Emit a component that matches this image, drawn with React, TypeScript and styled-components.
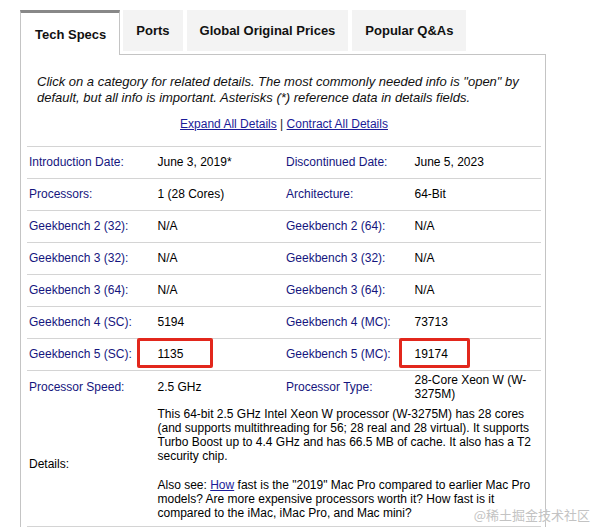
import React from "react";
import styled, { createGlobalStyle } from "styled-components";

const Global = createGlobalStyle`
  html, body { margin: 0; padding: 0; background: #fff; overflow: hidden; }
  body { font-family: "Liberation Sans", Arial, Helvetica, sans-serif; color: #000; }
`;

const Page = styled.div`
  position: relative;
  width: 593px;
  height: 527px;
  padding: 10px 0 0 20px;
  box-sizing: border-box;
  overflow: hidden;
`;

const TabBar = styled.div`
  display: flex;
  align-items: flex-start;
  gap: 4px;
  position: relative;
  z-index: 2;
`;

const Tab = styled.div<{ $active?: boolean }>`
  display: flex;
  align-items: center;
  justify-content: center;
  box-sizing: border-box;
  font-size: 13px;
  font-weight: bold;
  color: #111;
  white-space: nowrap;
  padding: 0 13px;
  height: ${(p) => (p.$active ? "45px" : "41px")};
  background: ${(p) => (p.$active ? "#fff" : "#f3f3f3")};
  border-top: ${(p) => (p.$active ? "3px solid #888" : "none")};
  border-left: ${(p) => (p.$active ? "1px solid #c4c4c4" : "none")};
  border-right: ${(p) => (p.$active ? "1px solid #c4c4c4" : "none")};
  padding-left: ${(p) => (p.$active ? "14px" : "13px")};
  margin-right: ${(p) => (p.$active ? "-1px" : "0")};
`;

const Panel = styled.div`
  width: 526px;
  box-sizing: border-box;
  margin-top: -1px;
  border: 1px solid #c4c4c4;
  padding: 0 4px 20px 6px;
`;

const Intro = styled.p`
  margin: 19px 0 0;
  padding: 0 10px;
  font-size: 13px;
  line-height: 16px;
  font-style: italic;
  color: #111;
`;

const LinkLine = styled.div`
  margin-top: 11px;
  text-align: center;
  font-size: 12px;
  line-height: 14px;
  color: #222;
`;

const Link = styled.a`
  color: #1b1b98;
  text-decoration: underline;
  cursor: pointer;
`;

const Table = styled.div`
  margin-top: 15px;
  border-top: 1px solid #d4d4d4;
`;

const Row = styled.div<{ $plain?: boolean }>`
  display: grid;
  grid-template-columns: repeat(4, 1fr);
  min-height: 31px;
  border-bottom: ${(p) => (p.$plain ? "none" : "1px solid #d4d4d4")};
`;

const Cell = styled.div<{ $label?: boolean }>`
  position: relative;
  display: flex;
  align-items: center;
  padding: 3px 2px;
  font-size: 12px;
  line-height: 13.8px;
  color: ${(p) => (p.$label ? "#15157e" : "#000")};
`;

const DetailBody = styled.div`
  grid-column: span 3;
  padding: 2px 2px 6px;
  font-size: 12px;
  line-height: 14px;
  color: #000;
  display: flex;
  flex-direction: column;
  gap: 15px;
`;

const Para = styled.p`
  margin: 0;
`;

const Highlight = styled.span<{ $left: number; $width: number }>`
  position: absolute;
  top: -1px;
  left: ${(p) => p.$left}px;
  width: ${(p) => p.$width}px;
  height: 30px;
  box-sizing: border-box;
  border: 3px solid #e2271c;
  border-radius: 2px;
  pointer-events: none;
`;

const Watermark = styled.div`
  position: absolute;
  right: 3px;
  bottom: 4px;
  font-family: "Noto Sans CJK SC", "Liberation Sans", sans-serif;
  font-size: 13px;
  line-height: 16px;
  color: #c3c3c3;
  text-shadow: 0 0 1px #fff;
  z-index: 5;
`;

type Spec = {
  l1: string;
  v1: string;
  l2: string;
  v2: string;
  mark?: boolean;
};

const specs: Spec[] = [
  { l1: "Introduction Date:", v1: "June 3, 2019*", l2: "Discontinued Date:", v2: "June 5, 2023" },
  { l1: "Processors:", v1: "1 (28 Cores)", l2: "Architecture:", v2: "64-Bit" },
  { l1: "Geekbench 2 (32):", v1: "N/A", l2: "Geekbench 2 (64):", v2: "N/A" },
  { l1: "Geekbench 3 (32):", v1: "N/A", l2: "Geekbench 3 (32):", v2: "N/A" },
  { l1: "Geekbench 3 (64):", v1: "N/A", l2: "Geekbench 3 (64):", v2: "N/A" },
  { l1: "Geekbench 4 (SC):", v1: "5194", l2: "Geekbench 4 (MC):", v2: "73713" },
  { l1: "Geekbench 5 (SC):", v1: "1135", l2: "Geekbench 5 (MC):", v2: "19174", mark: true },
];

export default function App() {
  return (
    <>
      <Global />
      <Page>
        <TabBar>
          <Tab $active>Tech Specs</Tab>
          <Tab>Ports</Tab>
          <Tab>Global Original Prices</Tab>
          <Tab>Popular Q&amp;As</Tab>
        </TabBar>
        <Panel>
          <Intro>
            Click on a category for related details. The most commonly needed info is "open" by
            default, but all info is important. Asterisks (*) reference data in details fields.
          </Intro>
          <LinkLine>
            <Link>Expand All Details</Link> | <Link>Contract All Details</Link>
          </LinkLine>
          <Table>
            {specs.map((s) => (
              <Row key={s.l1 + s.l2}>
                <Cell $label>{s.l1}</Cell>
                <Cell>
                  {s.mark && <Highlight $left={-19} $width={76} />}
                  {s.v1}
                </Cell>
                <Cell $label>{s.l2}</Cell>
                <Cell>
                  {s.mark && <Highlight $left={-14} $width={71} />}
                  {s.v2}
                </Cell>
              </Row>
            ))}
            <Row $plain>
              <Cell $label>Processor Speed:</Cell>
              <Cell>2.5 GHz</Cell>
              <Cell $label>Processor Type:</Cell>
              <Cell>28-Core Xeon W (W-3275M)</Cell>
            </Row>
            <Row>
              <Cell>Details:</Cell>
              <DetailBody>
                <Para>
                  This 64-bit 2.5 GHz Intel Xeon W processor (W-3275M) has 28 cores (and supports
                  multithreading for 56; 28 real and 28 virtual). It supports Turbo Boost up to 4.4
                  GHz and has 66.5 MB of cache. It also has a T2 security chip.
                </Para>
                <Para>
                  Also see: <Link>How</Link> fast is the "2019" Mac Pro compared to earlier Mac Pro
                  models? Are more expensive processors worth it? How fast is it compared to the
                  iMac, iMac Pro, and Mac mini?
                </Para>
              </DetailBody>
            </Row>
          </Table>
        </Panel>
        <Watermark>@稀土掘金技术社区</Watermark>
      </Page>
    </>
  );
}
